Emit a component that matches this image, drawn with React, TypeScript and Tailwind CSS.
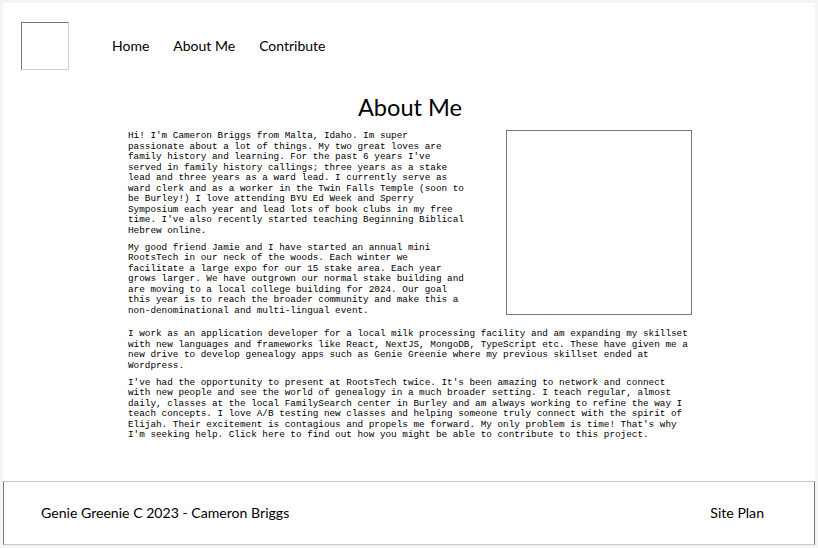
import React from "react";

const mono = { fontFamily: '"Liberation Mono", "Courier New", monospace' };

export default function App() {
  return (
    <div className="min-h-[548px] bg-[#f4f4f4] p-[3px]" style={{ fontFamily: 'Lato, "Noto Sans", sans-serif' }}>
      <div className="flex min-h-[542px] flex-col bg-white">
        <header className="flex items-center pl-[18px] pt-[19px]">
          <div className="h-[48px] w-[48px] border border-t-[#767676] border-l-[#767676] border-r-[#cfcfcf] border-b-[#cfcfcf]" />
          <nav className="mb-[2px] ml-[43px] flex gap-[24px] text-[14px] text-black">
            <span>Home</span>
            <span>About Me</span>
            <span>Contribute</span>
          </nav>
        </header>
        <main className="mx-auto w-[562px] flex-1">
          <h1 className="mt-[21px] pl-[2px] text-center text-[23.6px] leading-[32px] text-black">About Me</h1>
          <div className="mt-[8px] flex justify-between" style={mono}>
            <div className="w-[339px] text-[9.333px] leading-[10.5px] text-black">
              <p>
                Hi! I'm Cameron Briggs from Malta, Idaho. Im super passionate about a lot of things. My two great loves are family history and learning. For the past 6 years I've served in family history callings; three years as a stake lead and three years as a ward lead. I currently serve as ward clerk and as a worker in the Twin Falls Temple (soon to be Burley!) I love attending BYU Ed Week and Sperry Symposium each year and lead lots of book clubs in my free time. I've also recently started teaching Beginning Biblical Hebrew online.
              </p>
              <p className="mt-[6.5px]">
                My good friend Jamie and I have started an annual mini RootsTech in our neck of the woods. Each winter we facilitate a large expo for our 15 stake area. Each year grows larger. We have outgrown our normal stake building and are moving to a local college building for 2024. Our goal this year is to reach the broader community and make this a non-denominational and multi-lingual event.
              </p>
            </div>
            <div className="mr-[-2px] mt-[-1px] h-[185px] w-[186px] border border-[#777777]" />
          </div>
          <div className="mt-[13px] text-[9.333px] leading-[10.5px] text-black" style={mono}>
            <p>
              I work as an application developer for a local milk processing facility and am expanding my skillset with new languages and frameworks like React, NextJS, MongoDB, TypeScript etc. These have given me a new drive to develop genealogy apps such as Genie Greenie where my previous skillset ended at Wordpress.
            </p>
            <p className="mt-[6.5px]">
              I've had the opportunity to present at RootsTech twice. It's been amazing to network and connect with new people and see the world of genealogy in a much broader setting. I teach regular, almost daily, classes at the local FamilySearch center in Burley and am always working to refine the way I teach concepts. I love A/B testing new classes and helping someone truly connect with the spirit of Elijah. Their excitement is contagious and propels me forward. My only problem is time! That's why I'm seeking help. Click here to find out how you might be able to contribute to this project.
            </p>
          </div>
        </main>
        <footer className="flex h-[64px] items-center justify-between border border-t-[#c8c8c8] border-l-[#7a7a7a] border-r-[#7a7a7a] border-b-[#c8c8c8] pl-[37px] pr-[50px] text-[14.1px] text-black">
          <span className="-mt-[1px]">Genie Greenie C 2023 - Cameron Briggs</span>
          <span className="-mt-[1px]">Site Plan</span>
        </footer>
      </div>
    </div>
  );
}
